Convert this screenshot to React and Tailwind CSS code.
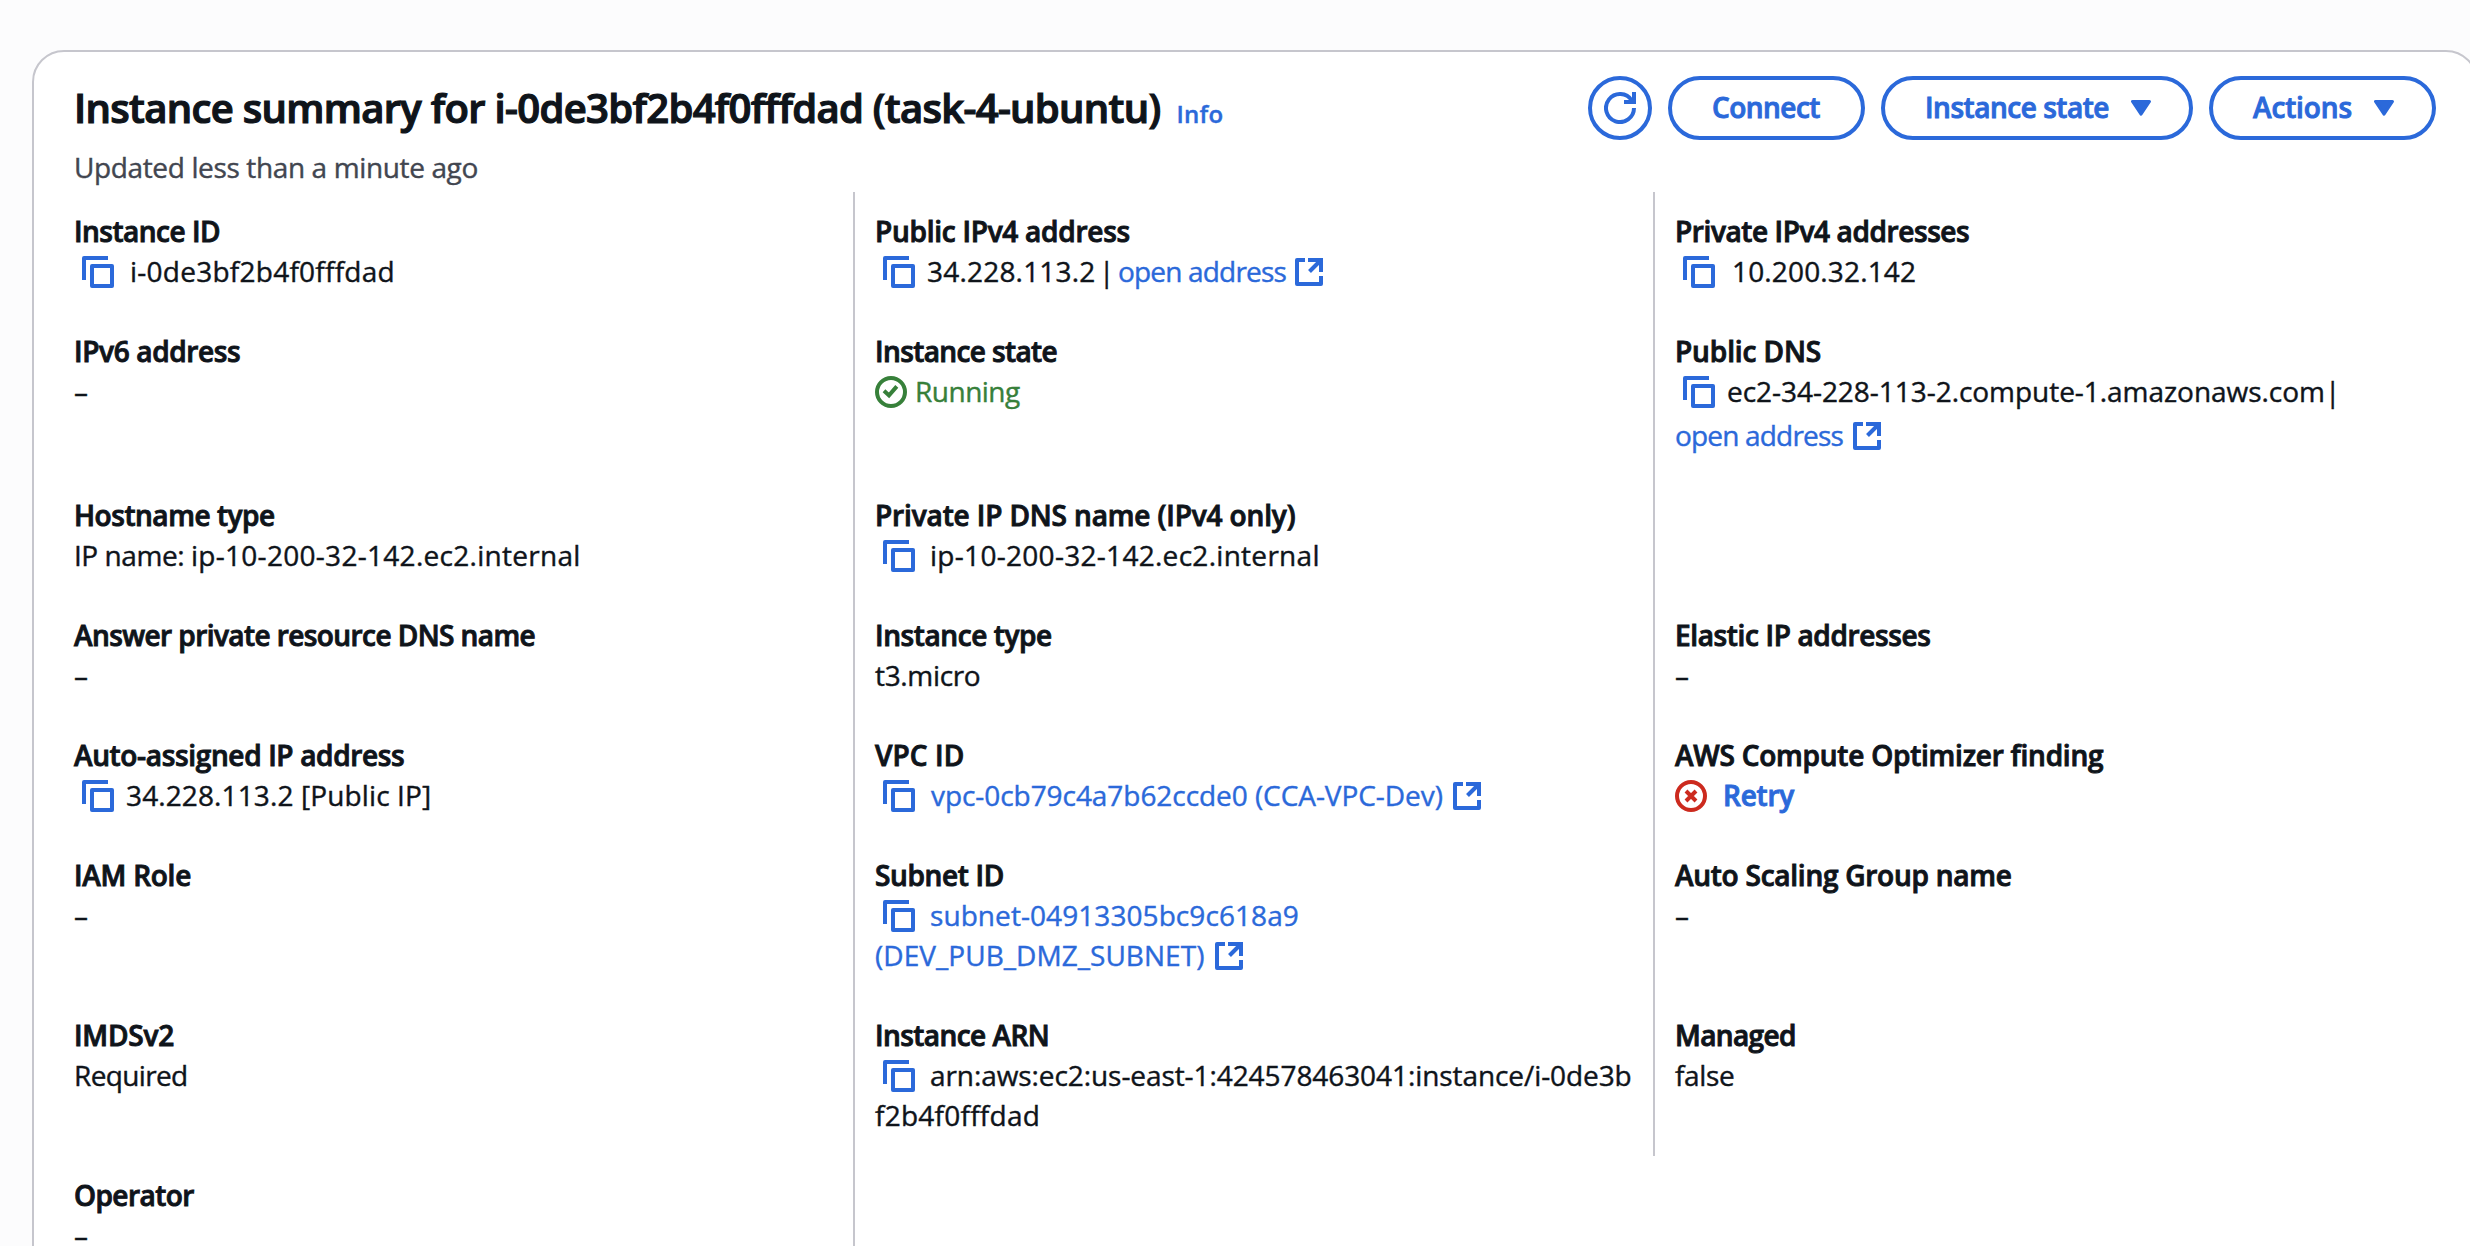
import React from 'react';

function CopyIcon() {
  return (
    <svg viewBox="0 0 32 32" className="ml-2 mt-1 size-8 shrink-0" fill="none" stroke="#2b69da" strokeWidth="4" strokeLinejoin="round">
      <path d="M2 24V2H26" />
      <path d="M10 10H30V30H10Z" />
    </svg>
  );
}

function ExternalIcon({ className }) {
  return (
    <svg viewBox="0 0 28 28" className={`mt-1.5 size-7 shrink-0 ${className}`} fill="none" stroke="#2b69da" strokeWidth="4">
      <path d="M10 2H2V26H26V18" strokeLinejoin="round" />
      <path d="M13 2H26V14" />
      <path d="M26 2L14.5 13.5" />
    </svg>
  );
}

function SuccessIcon() {
  return (
    <svg viewBox="0 0 32 32" className="mt-1 size-8 shrink-0" fill="none" stroke="#37803a" strokeWidth="4">
      <circle cx="16" cy="16" r="14" />
      <path d="M9 14.8L14 19.4L21.8 10.4" />
    </svg>
  );
}

function ErrorIcon() {
  return (
    <svg viewBox="0 0 32 32" className="mt-1 size-8 shrink-0" fill="none" stroke="#cc2a1e" strokeWidth="4">
      <circle cx="16" cy="16" r="14" />
      <path d="M11 11L21 21M21 11L11 21" />
    </svg>
  );
}

function RefreshIcon() {
  return (
    <svg viewBox="0 0 32 32" className="size-8" fill="none" stroke="#2b69da" strokeWidth="4">
      <path d="M30 16A14 14 0 1 1 27.8 8.5" />
      <path d="M30 0V10H20" />
    </svg>
  );
}

function Caret() {
  return (
    <svg viewBox="0 0 20 16" className="mt-5 h-4 w-5 shrink-0" fill="#2b69da" stroke="#2b69da" strokeWidth="3" strokeLinejoin="round">
      <path d="M1.5 1.5H18.5L10 14.2Z" />
    </svg>
  );
}

function Field({ label, tracking, className = '', children }) {
  return (
    <div className={`pt-5 ${className}`}>
      <div className={`h-10 font-semibold [-webkit-text-stroke:0.9px] ${tracking}`}>{label}</div>
      {children}
    </div>
  );
}

const Line = ({ className = '', children }) => <div className={`flex h-10 items-start ${className}`}>{children}</div>;

const Dash = () => <Line>–</Line>;

const MID = 'border-l-2 border-[#c6c6cd] pl-5';
const LINK = 'text-[#2b69da]';
const BUTTON =
  'flex h-16 items-start rounded-full border-4 border-[#2b69da] text-[28px] font-semibold leading-[55px] text-[#2b69da] [-webkit-text-stroke:0.9px]';

export default function App() {
  return (
    <div className="h-[1246px] w-[2470px] overflow-hidden bg-[#fcfcfd] pl-8 pt-[50px] font-['Open_Sans',sans-serif] text-[#0f141a]">
      <div className="h-[1400px] w-[2446px] rounded-[32px] border-2 border-[#c6c6cd] bg-white px-10 pt-6">
        <div className="flex h-16 items-start justify-between whitespace-nowrap">
          <h1 className="text-[40px] font-semibold leading-[63px] tracking-[-0.68px] [-webkit-text-stroke:1.2px]">
            Instance summary for i-0de3bf2b4f0fffdad (task-4-ubuntu)
            <span className="ml-4 text-[24px] tracking-[0.25px] text-[#2b69da] [-webkit-text-stroke:0.4px]">Info</span>
          </h1>
          <div className="flex gap-4">
            <button className="flex size-16 items-center justify-center rounded-full border-4 border-[#2b69da]">
              <RefreshIcon />
            </button>
            <button className={`${BUTTON} w-[197px] pl-10 tracking-[-0.52px]`}>Connect</button>
            <button className={`${BUTTON} w-[312px] justify-between pl-10 pr-[38px] tracking-[-0.47px]`}>
              Instance state
              <Caret />
            </button>
            <button className={`${BUTTON} w-[227px] justify-between pl-10 pr-[38px] tracking-[-0.13px]`}>
              Actions
              <Caret />
            </button>
          </div>
        </div>
        <div className="mb-[5px] mt-[7px] text-[28px] leading-10 tracking-[-0.37px] text-[#424650] [-webkit-text-stroke:0.4px]">
          Updated less than a minute ago
        </div>

        <div className="grid grid-cols-[779px_800px_1fr] grid-rows-[120px_164px_120px_120px_120px_160px_160px_120px] whitespace-nowrap text-[28px] leading-[38px] [-webkit-text-stroke:0.4px]">
          <Field label="Instance ID" tracking="tracking-[-0.5px]">
            <Line>
              <CopyIcon />
              <span className="ml-4 tracking-[0.25px]">i-0de3bf2b4f0fffdad</span>
            </Line>
          </Field>
          <Field label="Public IPv4 address" tracking="tracking-[-0.26px]" className={MID}>
            <Line>
              <CopyIcon />
              <span className="ml-3 w-[172px] tracking-[0.2px]">34.228.113.2</span>
              <span className="w-[19px]">|</span>
              <span className={`tracking-[-0.82px] ${LINK}`}>open address</span>
              <ExternalIcon className="ml-[9px]" />
            </Line>
          </Field>
          <Field label="Private IPv4 addresses" tracking="tracking-[-0.4px]" className={MID}>
            <Line>
              <CopyIcon />
              <span className="ml-[17px] tracking-[0.15px]">10.200.32.142</span>
            </Line>
          </Field>

          <Field label="IPv6 address" tracking="tracking-[-0.35px]">
            <Dash />
          </Field>
          <Field label="Instance state" tracking="tracking-[-0.6px]" className={MID}>
            <Line>
              <SuccessIcon />
              <span className="ml-2 tracking-[-0.5px] text-[#37803a]">Running</span>
            </Line>
          </Field>
          <Field label="Public DNS" tracking="tracking-[-0.1px]" className={MID}>
            <Line className="mb-1">
              <CopyIcon />
              <span className="ml-3 tracking-[-0.04px]">ec2-34-228-113-2.compute-1.amazonaws.com</span>
              <span>|</span>
            </Line>
            <Line>
              <span className={`tracking-[-0.82px] ${LINK}`}>open address</span>
              <ExternalIcon className="ml-[10px]" />
            </Line>
          </Field>

          <Field label="Hostname type" tracking="tracking-[-0.45px]">
            <Line>
              <span className="whitespace-pre tracking-[-0.45px]">IP name: </span>
              <span className="tracking-[0.29px]">ip-10-200-32-142.ec2.internal</span>
            </Line>
          </Field>
          <Field label="Private IP DNS name (IPv4 only)" tracking="tracking-[-0.13px]" className={MID}>
            <Line>
              <CopyIcon />
              <span className="ml-[15px] tracking-[0.29px]">ip-10-200-32-142.ec2.internal</span>
            </Line>
          </Field>
          <div className={MID} />

          <Field label="Answer private resource DNS name" tracking="tracking-[-0.57px]">
            <Dash />
          </Field>
          <Field label="Instance type" tracking="tracking-[-0.4px]" className={MID}>
            <Line className="tracking-[-0.34px]">t3.micro</Line>
          </Field>
          <Field label="Elastic IP addresses" tracking="tracking-[-0.36px]" className={MID}>
            <Dash />
          </Field>

          <Field label="Auto-assigned IP address" tracking="tracking-[-0.34px]">
            <Line>
              <CopyIcon />
              <span className="ml-3 tracking-[0.12px]">34.228.113.2 [Public IP]</span>
            </Line>
          </Field>
          <Field label="VPC ID" tracking="tracking-[0.1px]" className={MID}>
            <Line>
              <CopyIcon />
              <span className={`ml-4 tracking-[-0.06px] ${LINK}`}>vpc-0cb79c4a7b62ccde0 (CCA-VPC-Dev)</span>
              <ExternalIcon className="ml-[10px]" />
            </Line>
          </Field>
          <Field label="AWS Compute Optimizer finding" tracking="tracking-[-0.23px]" className={MID}>
            <Line>
              <ErrorIcon />
              <span className={`ml-4 font-semibold tracking-[-0.22px] [-webkit-text-stroke:0.9px] ${LINK}`}>Retry</span>
            </Line>
          </Field>

          <Field label="IAM Role" tracking="tracking-[-0.25px]">
            <Dash />
          </Field>
          <Field label="Subnet ID" tracking="tracking-[-0.35px]" className={MID}>
            <Line>
              <CopyIcon />
              <span className={`ml-[15px] tracking-[0.07px] ${LINK}`}>subnet-04913305bc9c618a9</span>
            </Line>
            <Line>
              <span className={`tracking-[0.04px] ${LINK}`}>(DEV_PUB_DMZ_SUBNET)</span>
              <ExternalIcon className="ml-[11px]" />
            </Line>
          </Field>
          <Field label="Auto Scaling Group name" tracking="tracking-[-0.25px]" className={MID}>
            <Dash />
          </Field>

          <Field label="IMDSv2" tracking="tracking-[-0.2px]">
            <Line className="tracking-[-0.65px]">Required</Line>
          </Field>
          <Field label="Instance ARN" tracking="tracking-[-0.55px]" className={MID}>
            <Line>
              <CopyIcon />
              <span className="ml-[15px] tracking-[-0.08px]">arn:aws:ec2:us-east-1:424578463041:instance/i-0de3b</span>
            </Line>
            <Line className="tracking-[0.25px]">f2b4f0fffdad</Line>
          </Field>
          <Field label="Managed" tracking="tracking-[-0.62px]" className={MID}>
            <Line className="tracking-[-0.35px]">false</Line>
          </Field>

          <Field label="Operator" tracking="tracking-[-0.55px]">
            <Dash />
          </Field>
          <div className={MID} />
        </div>
      </div>
    </div>
  );
}
